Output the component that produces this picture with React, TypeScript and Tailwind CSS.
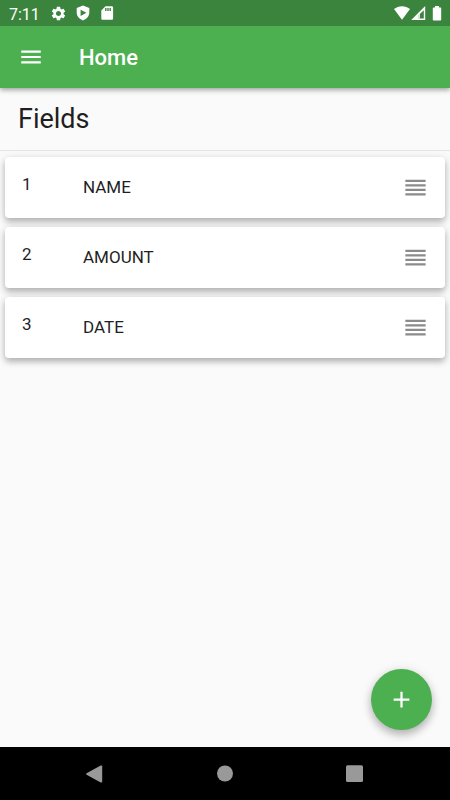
import type { ReactNode } from "react";
import { MdAdd, MdMenu, MdReorder, MdSettings } from "react-icons/md";

interface Field {
  id: number;
  name: string;
}

const fields: Field[] = [
  { id: 1, name: "NAME" },
  { id: 2, name: "AMOUNT" },
  { id: 3, name: "DATE" },
];

function StatusBar() {
  return (
    <div className="flex h-[26px] items-center justify-between bg-[#3b843e] pr-2 pl-[9px] text-white">
      <div className="flex items-center">
        <span className="w-[41px] pt-1 text-base leading-none">7:11</span>
        <div className="flex items-center gap-2">
          <MdSettings size={17} aria-hidden="true" />
          <svg width="16" height="16" viewBox="0 0 16 16" fill="currentColor" aria-hidden="true">
            <path
              fillRule="evenodd"
              d="M8 .5 14.300 2.900v4.700c0 3.600-2.500 6.400-6.300 7.900-3.800-1.500-6.300-4.300-6.300-7.900V2.900L8 .5ZM5.600 4.700v6.200L11.400 7.800 5.600 4.700Z"
            />
          </svg>
          <svg width="16" height="16" viewBox="0 0 16 16" fill="currentColor" aria-hidden="true">
            <path
              fillRule="evenodd"
              d="M6.500 1.300h6.300c.7 0 1.300.6 1.300 1.300v10.900c0 .7-.6 1.300-1.300 1.300H3.600c-.7 0-1.300-.6-1.300-1.300V5.400l4.200-4.100ZM6.100 2.900v3h1.400v-3H6.100Zm2.200 0v3h1.400v-3H8.300Zm2.200 0v3h1.400v-3h-1.400Z"
            />
          </svg>
        </div>
      </div>
      <div className="flex items-center">
        <svg width="16" height="14" viewBox="0 0 16 14" fill="currentColor" aria-hidden="true">
          <path d="M8 13.800 0 3.100C2.200 1.300 5 .2 8 .2s5.800 1.100 8 2.900L8 13.800Z" />
        </svg>
        <svg width="16" height="14" viewBox="0 0 16 14" fill="currentColor" aria-hidden="true">
          <path fillRule="evenodd" d="M15.200 0v14H1.200L15.200 0Zm-1.400 4.200-5.300 5v3.400h5.300V4.200Z" />
          <path d="M8.500 6.500h1.300v6.100H8.500z" />
        </svg>
        <svg width="10" height="15" viewBox="0 0 10 15" fill="currentColor" className="ml-1.5" aria-hidden="true">
          <path d="M3 0h4v1.400h1.400c.5 0 .8.3.8.8v11.500c0 .5-.3.800-.8.800H1.600c-.5 0-.8-.3-.8-.8V2.200c0-.5.3-.8.8-.8H3V0Z" />
        </svg>
      </div>
    </div>
  );
}

function FieldCard({ field }: { field: Field }) {
  return (
    <li className="flex h-[61px] items-center rounded bg-white px-4 pb-0.5 shadow-[0_4px_6px_rgba(0,0,0,0.24),0_1px_8px_rgba(0,0,0,0.1)]">
      <span className="w-[62px] pb-1.5 pl-px text-[17px] leading-6">{field.id}</span>
      <span className="flex-1 text-[17px] leading-6">{field.name}</span>
      <button type="button" aria-label={`Reorder ${field.name}`} className="pt-0.5 text-[#8b8b8b]">
        <MdReorder size={27} />
      </button>
    </li>
  );
}

function NavButton({ label, children }: { label: string; children: ReactNode }) {
  return (
    <button type="button" aria-label={label} className="text-[#999999]">
      <svg width="18" height="18" viewBox="0 0 18 18" fill="currentColor">
        {children}
      </svg>
    </button>
  );
}

export default function App() {
  return (
    <div className="flex min-h-screen flex-col bg-[#fafafa] font-[Roboto,sans-serif] text-[#1f1f1f]">
      <header className="shadow-[0_2px_5px_rgba(0,0,0,0.36)]">
        <StatusBar />
        <div className="flex h-[62px] items-center bg-[#4caf50] px-[18px] text-white">
          <button type="button" aria-label="Open menu">
            <MdMenu size={26} />
          </button>
          <h1 className="ml-[35px] pt-0.5 text-[22px] leading-7 font-medium">Home</h1>
        </div>
      </header>

      <main className="flex flex-1 flex-col">
        <h2 className="flex h-[63px] items-center border-b border-[#e4e4e4] px-[18px] text-[27px] leading-8">
          Fields
        </h2>
        <ul className="flex flex-col gap-[9px] px-[5px] py-1.5">
          {fields.map((field) => (
            <FieldCard key={field.id} field={field} />
          ))}
        </ul>
        <button
          type="button"
          aria-label="Add field"
          className="mt-auto mr-[18px] mb-[17px] flex size-[61px] items-center justify-center self-end rounded-full bg-[#4caf50] text-white shadow-[0_5px_8px_rgba(0,0,0,0.24),0_1px_12px_rgba(0,0,0,0.1)]"
        >
          <MdAdd size={27} />
        </button>
      </main>

      <nav className="flex h-[53px] items-center justify-center gap-28 bg-black">
        <NavButton label="Back">
          <path d="M14.700.600c.8-.4 1.500 0 1.500.700v15.400c0 .700-.700 1.100-1.500.700L.6 9.700c-.6-.4-.6-1 0-1.400L14.700.600Z" />
        </NavButton>
        <NavButton label="Home">
          <circle cx="9" cy="8.500" r="8" />
        </NavButton>
        <NavButton label="Recent apps">
          <rect x="0" y="0.200" width="17" height="16.800" rx="1.500" />
        </NavButton>
      </nav>
    </div>
  );
}
